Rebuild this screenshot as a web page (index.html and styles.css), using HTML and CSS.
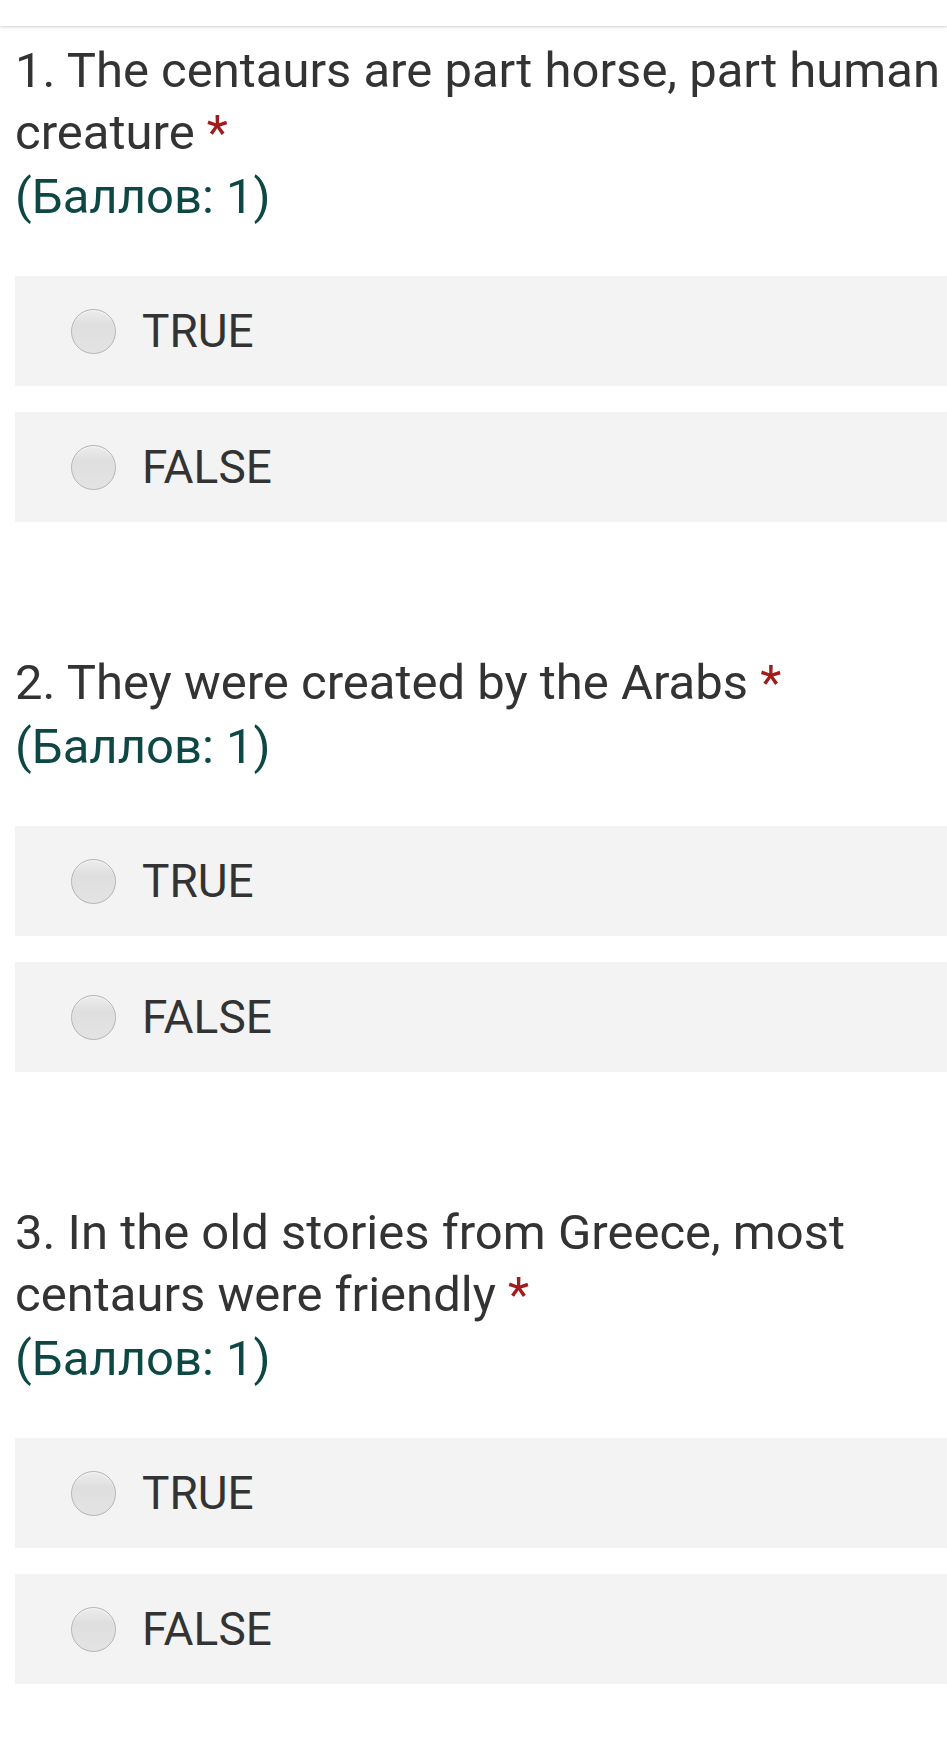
FILE: index.html
```html
<!DOCTYPE html>
<html lang="en">
<head>
<meta charset="utf-8">
<title>Quiz</title>
<link rel="stylesheet" href="styles.css">
</head>
<body>
<header class="topbar"></header>
<main class="quiz">
  <section class="question">
    <div class="q-title">1. The centaurs are part horse, part human creature <span class="req">*</span></div>
    <div class="q-points">(Баллов: 1)</div>
    <div class="options">
      <label class="option"><span class="radio"></span><span class="opt-text">TRUE</span></label>
      <label class="option"><span class="radio"></span><span class="opt-text">FALSE</span></label>
    </div>
  </section>
  <section class="question">
    <div class="q-title">2. They were created by the Arabs <span class="req">*</span></div>
    <div class="q-points">(Баллов: 1)</div>
    <div class="options">
      <label class="option"><span class="radio"></span><span class="opt-text">TRUE</span></label>
      <label class="option"><span class="radio"></span><span class="opt-text">FALSE</span></label>
    </div>
  </section>
  <section class="question">
    <div class="q-title">3. In the old stories from Greece, most centaurs were friendly <span class="req">*</span></div>
    <div class="q-points">(Баллов: 1)</div>
    <div class="options">
      <label class="option"><span class="radio"></span><span class="opt-text">TRUE</span></label>
      <label class="option"><span class="radio"></span><span class="opt-text">FALSE</span></label>
    </div>
  </section>
</main>
</body>
</html>
```

FILE: styles.css
```css
html, body {
  margin: 0;
  padding: 0;
  background: #ffffff;
}

body {
  font-family: Roboto, "Noto Sans", "Liberation Sans", sans-serif;
  color: #333333;
  width: 947px;
  height: 1752px;
  overflow: hidden;
}

.topbar {
  height: 26px;
  background: #ffffff;
  box-shadow: 0 1px 2px rgba(0, 0, 0, 0.14), 0 3px 6px rgba(0, 0, 0, 0.04);
  position: relative;
  z-index: 1;
}

.quiz {
  padding-left: 15px;
  padding-top: 14px;
}

.question + .question {
  margin-top: 130px;
}

.q-title {
  font-size: 49px;
  line-height: 62px;
  color: #333333;
}

.req {
  color: #a11d1d;
}

.q-points {
  font-size: 49px;
  line-height: 62px;
  margin-top: 2px;
  color: #0e4845;
}

.options {
  margin-top: 48px;
  display: flex;
  flex-direction: column;
  gap: 26px;
}

.option {
  height: 110px;
  background: #f3f3f3;
  display: flex;
  align-items: center;
  padding-left: 56px;
}

.radio {
  width: 43px;
  height: 43px;
  border-radius: 50%;
  border: 1px solid #b4b4b4;
  background: linear-gradient(180deg, #ececec 0%, #dfdfdf 35%, #e3e3e3 100%);
  box-shadow: inset 0 1px 1px rgba(255, 255, 255, 0.6);
  flex: none;
}

.opt-text {
  margin-left: 26px;
  font-size: 46px;
  color: #333333;
}
```
